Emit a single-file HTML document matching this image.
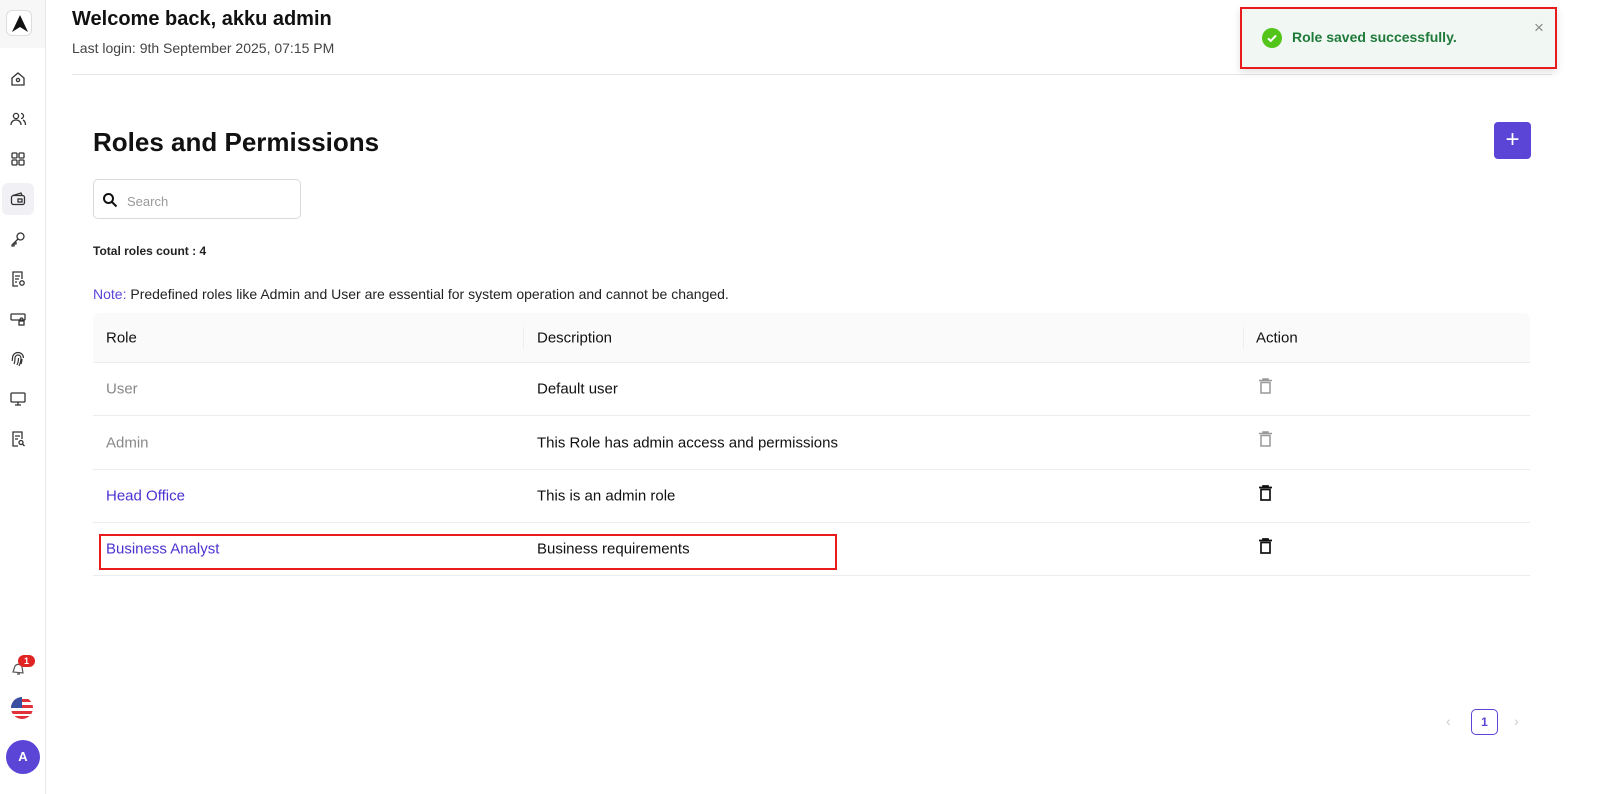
<!DOCTYPE html>
<html><head><meta charset="utf-8"><style>
*{box-sizing:border-box;margin:0;padding:0}
body{width:1600px;height:794px;background:#fff;font-family:"Liberation Sans",sans-serif;color:#111;position:relative;overflow:hidden}
.sb{position:absolute;left:0;top:0;width:46px;height:794px;border-right:1px solid #e8e8e8;background:#fff}
.logo{position:absolute;left:0;top:0;width:45px;height:48px;background:#f7f7f7}
.logo div{position:absolute;left:6px;top:10px;width:26px;height:26px;border:1px solid #ddd;border-radius:6px;background:#fff}
.ic{position:absolute;left:9px;width:18px;height:18px}
.abs{position:absolute}
.row{position:absolute;left:93px;width:1437px;border-bottom:1px solid #ececec;font-size:15px}
.row span{position:absolute;top:50%;transform:translateY(-50%)}
</style></head><body>
<div class="sb">
<div class="logo"><div><svg width="26" height="26" viewBox="0 0 26 26"><path d="M13 4 L21 21 L13 16 L5 21 Z" fill="#111"/></svg></div></div>
<svg class="ic" style="top:70px" viewBox="0 0 18 18" fill="none" stroke="#333" stroke-width="1.3"><path d="M3 8 L9 3 L15 8 V15 H3 Z"/><circle cx="9" cy="10" r="1.6"/></svg>
<svg class="ic" style="top:110px" viewBox="0 0 18 18" fill="none" stroke="#333" stroke-width="1.3"><circle cx="7" cy="6" r="2.6"/><path d="M2 15c0-3 2-5 5-5s5 2 5 5"/><path d="M12 3.5a2.5 2.5 0 0 1 0 5M14 10c1.5.8 2.5 2.5 2.5 5"/></svg>
<svg class="ic" style="top:150px" viewBox="0 0 18 18" fill="none" stroke="#333" stroke-width="1.3"><rect x="3" y="3" width="5" height="5" rx="1"/><rect x="10" y="3" width="5" height="5" rx="1"/><rect x="3" y="10" width="5" height="5" rx="1"/><rect x="10" y="10" width="5" height="5" rx="1"/></svg>
<div class="abs" style="left:2px;top:183px;width:32px;height:32px;background:#f0f0f5;border-radius:6px"></div>
<svg class="ic" style="top:190px" viewBox="0 0 18 18" fill="none" stroke="#333" stroke-width="1.3"><rect x="2.5" y="5.5" width="13" height="9" rx="2"/><path d="M4 5.5 L12 3 L13 5.5"/><rect x="9" y="9" width="4" height="3"/></svg>
<svg class="ic" style="top:230px" viewBox="0 0 18 18" fill="none" stroke="#333" stroke-width="1.3"><circle cx="11.5" cy="6.5" r="3.5"/><path d="M9 9 L3 15 V16 H5 V14 H7 V12"/></svg>
<svg class="ic" style="top:270px" viewBox="0 0 18 18" fill="none" stroke="#333" stroke-width="1.3"><path d="M9 16H4V2h9v7"/><path d="M6 6h5M6 9h4M6 12h2"/><circle cx="13" cy="13" r="2.2"/></svg>
<svg class="ic" style="top:310px" viewBox="0 0 18 18" fill="none" stroke="#333" stroke-width="1.3"><rect x="2" y="4" width="14" height="6" rx="1"/><rect x="10" y="11" width="5" height="4"/><path d="M11 11v-1.5a1.5 1.5 0 0 1 3 0V11"/></svg>
<svg class="ic" style="top:350px" viewBox="0 0 18 18" fill="none" stroke="#333" stroke-width="1.2"><path d="M5 14c1-2 1-5 1-6a3 3 0 0 1 6 0c0 3-1 6-2 8M8 15c1-2 1.5-4 1.5-7M12 14c.6-1.5 1-3 1-5M3 11c.5-1 .5-2 .5-3a5.5 5.5 0 0 1 11 0"/></svg>
<svg class="ic" style="top:390px" viewBox="0 0 18 18" fill="none" stroke="#333" stroke-width="1.3"><rect x="2" y="3" width="14" height="9" rx="1"/><path d="M9 12v3M6 15h6"/></svg>
<svg class="ic" style="top:430px" viewBox="0 0 18 18" fill="none" stroke="#333" stroke-width="1.3"><path d="M9 16H4V2h9v7"/><path d="M6 6h5M6 9h3"/><circle cx="12" cy="12.5" r="2"/><path d="M13.5 14l2 2"/></svg>
<svg class="ic" style="top:659px" viewBox="0 0 18 18" fill="none" stroke="#555" stroke-width="1.2"><path d="M4 13 L6 7 a4 4 0 0 1 7 1 L14 14 Z M8 15h3"/></svg>
<div class="abs" style="left:18px;top:655px;width:17px;height:12px;background:#e02424;border-radius:7px;color:#fff;font-size:9px;font-weight:bold;text-align:center;line-height:12px">1</div>
<svg class="abs" style="left:11px;top:697px" width="22" height="22" viewBox="0 0 22 22"><defs><clipPath id="c"><circle cx="11" cy="11" r="11"/></clipPath></defs><g clip-path="url(#c)"><rect width="22" height="22" fill="#fff"/><rect y="2" width="22" height="3" fill="#e0313a"/><rect y="8" width="22" height="3" fill="#e0313a"/><rect y="14" width="22" height="3" fill="#e0313a"/><rect y="19" width="22" height="3" fill="#e0313a"/><rect width="11" height="11" fill="#3b4fa0"/></g></svg>
<div class="abs" style="left:6px;top:740px;width:34px;height:34px;border-radius:50%;background:#5a45d6;color:#fff;font-weight:bold;font-size:13px;text-align:center;line-height:34px">A</div>
</div>

<div class="abs" style="left:72px;top:8px;font-size:20px;font-weight:bold;color:#111">Welcome back, akku admin</div>
<div class="abs" style="left:72px;top:40px;font-size:14px;color:#444">Last login: 9th September 2025, 07:15 PM</div>
<div class="abs" style="left:72px;top:74px;width:1480px;height:1px;background:#e6e6e6"></div>

<div class="abs" style="left:1240px;top:7px;width:317px;height:62px;background:#f1f8f4;border:2px solid #e81c1c;box-shadow:0 3px 8px rgba(0,0,0,.12)"></div>
<svg class="abs" style="left:1262px;top:28px" width="20" height="20" viewBox="0 0 20 20"><circle cx="10" cy="10" r="10" fill="#52c41a"/><path d="M6 10.3l2.7 2.7L14 7.5" stroke="#fff" stroke-width="2" fill="none"/></svg>
<div class="abs" style="left:1292px;top:29px;font-size:14px;font-weight:bold;color:#1f7a3a">Role saved successfully.</div>
<div class="abs" style="left:1534px;top:18px;font-size:17px;color:#888">×</div>

<div class="abs" style="left:93px;top:127px;font-size:26px;font-weight:bold;color:#111">Roles and Permissions</div>
<div class="abs" style="left:1494px;top:122px;width:37px;height:37px;background:#5a45d6;border-radius:4px;color:#fff;font-size:24px;text-align:center;line-height:35px">+</div>

<div class="abs" style="left:93px;top:179px;width:208px;height:40px;border:1px solid #d9d9d9;border-radius:5px"></div>
<svg class="abs" style="left:102px;top:192px" width="16" height="16" viewBox="0 0 16 16" fill="none" stroke="#111" stroke-width="2"><circle cx="6.5" cy="6.5" r="4.5"/><path d="M10 10l4.5 4.5"/></svg>
<div class="abs" style="left:127px;top:194px;font-size:13px;color:#999">Search</div>

<div class="abs" style="left:93px;top:244px;font-size:12px;font-weight:bold;color:#222">Total roles count : 4</div>
<div class="abs" style="left:93px;top:286px;font-size:14px;color:#222"><span style="color:#5a45d6">Note:</span> Predefined roles like Admin and User are essential for system operation and cannot be changed.</div>

<div class="row" style="top:313px;height:50px;background:#fafafa;border-radius:6px 6px 0 0"><span style="left:13px">Role</span><span style="left:444px">Description</span><span style="left:1163px">Action</span>
<div class="abs" style="left:430px;top:14px;width:1px;height:22px;background:#eee"></div><div class="abs" style="left:1150px;top:14px;width:1px;height:22px;background:#eee"></div></div>
<div class="row" style="top:363px;height:53px"><span style="left:13px;color:#888">User</span><span style="left:444px">Default user</span></div>
<div class="row" style="top:416px;height:54px"><span style="left:13px;color:#888">Admin</span><span style="left:444px">This Role has admin access and permissions</span></div>
<div class="row" style="top:470px;height:53px"><span style="left:13px;color:#4b32d0">Head Office</span><span style="left:444px">This is an admin role</span></div>
<div class="row" style="top:523px;height:53px"><span style="left:13px;color:#4b32d0">Business Analyst</span><span style="left:444px">Business requirements</span></div>
<div class="abs" style="left:99px;top:534px;width:738px;height:36px;border:2px solid #e81c1c"></div>

<svg class="abs" style="left:1258px;top:378px" width="15" height="16" viewBox="0 0 15 16" fill="none" stroke="#999" stroke-width="1.5"><path d="M1 2.5h13M5 2.5V1h5v1.5"/><rect x="3" y="4.5" width="9" height="10.5"/></svg>
<svg class="abs" style="left:1258px;top:431px" width="15" height="16" viewBox="0 0 15 16" fill="none" stroke="#999" stroke-width="1.5"><path d="M1 2.5h13M5 2.5V1h5v1.5"/><rect x="3" y="4.5" width="9" height="10.5"/></svg>
<svg class="abs" style="left:1258px;top:485px" width="15" height="16" viewBox="0 0 15 16" fill="none" stroke="#111" stroke-width="1.7"><path d="M1 2.5h13M5 2.5V1h5v1.5"/><rect x="3" y="4.5" width="9" height="10.5"/></svg>
<svg class="abs" style="left:1258px;top:538px" width="15" height="16" viewBox="0 0 15 16" fill="none" stroke="#111" stroke-width="1.7"><path d="M1 2.5h13M5 2.5V1h5v1.5"/><rect x="3" y="4.5" width="9" height="10.5"/></svg>

<div class="abs" style="left:1446px;top:713px;font-size:14px;color:#ccc">‹</div>
<div class="abs" style="left:1471px;top:709px;width:27px;height:26px;border:1px solid #5a45d6;border-radius:5px;color:#5a45d6;font-size:12px;font-weight:bold;text-align:center;line-height:24px">1</div>
<div class="abs" style="left:1514px;top:713px;font-size:14px;color:#ccc">›</div>
</body></html>
